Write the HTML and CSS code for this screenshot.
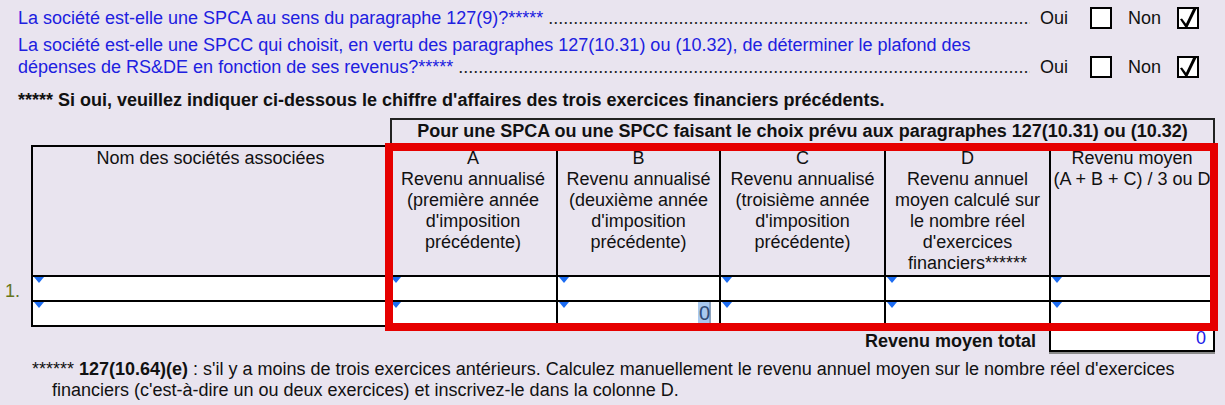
FILE: index.html
```html
<!DOCTYPE html>
<html lang="fr">
<head>
    <meta charset="UTF-8">
    <meta name="viewport" content="width=device-width, initial-scale=1.0">
    <title>Sociétés associées</title>
    <link rel="stylesheet" href="styles.css">
</head>
<body>
    <div class="questions">
        <div class="q-row">
            <span class="q-text">La société est-elle une SPCA au sens du paragraphe 127(9)?*****</span>
            <span class="leader"></span>
            <span class="opt oui">Oui</span><span class="box first"></span>
            <span class="opt non">Non</span><span class="box"><svg width="18" height="18" viewBox="0 0 18 18"><polygon points="1,10.2 3,9.4 7,14.8 14,0 17.4,0 8.6,18 6.2,18"/></svg></span>
        </div>
        <div class="q-line">La société est-elle une SPCC qui choisit, en vertu des paragraphes 127(10.31) ou (10.32), de déterminer le plafond des</div>
        <div class="q-row">
            <span class="q-text">dépenses de RS&amp;DE en fonction de ses revenus?*****</span>
            <span class="leader"></span>
            <span class="opt oui">Oui</span><span class="box first"></span>
            <span class="opt non">Non</span><span class="box"><svg width="18" height="18" viewBox="0 0 18 18"><polygon points="1,10.2 3,9.4 7,14.8 14,0 17.4,0 8.6,18 6.2,18"/></svg></span>
        </div>
        <p class="note">***** Si oui, veuillez indiquer ci-dessous le chiffre d'affaires des trois exercices financiers précédents.</p>
    </div>

    <div class="grid">
        <div></div>
        <div></div>
        <div class="sup">Pour une SPCA ou une SPCC faisant le choix prévu aux paragraphes 127(10.31) ou (10.32)</div>

        <div></div>
        <div class="head">Nom des sociétés associées</div>
        <div class="head">A<br>Revenu annualisé<br>(première année<br>d'imposition<br>précédente)</div>
        <div class="head">B<br>Revenu annualisé<br>(deuxième année<br>d'imposition<br>précédente)</div>
        <div class="head">C<br>Revenu annualisé<br>(troisième année<br>d'imposition<br>précédente)</div>
        <div class="head">D<br>Revenu annuel<br>moyen calculé sur<br>le nombre réel<br>d'exercices<br>financiers******</div>
        <div class="head last">Revenu moyen<br>(A + B + C) / 3 ou D</div>

        <div class="num">1.</div>
        <div class="cell"><i class="tri"></i></div>
        <div class="cell"><i class="tri"></i></div>
        <div class="cell"><i class="tri"></i></div>
        <div class="cell"><i class="tri"></i></div>
        <div class="cell"><i class="tri"></i></div>
        <div class="cell last"><i class="tri"></i></div>

        <div class="cell bottom"><i class="tri"></i></div>
        <div class="cell bottom"><i class="tri"></i></div>
        <div class="cell bottom val"><i class="tri"></i><span class="sel">0</span></div>
        <div class="cell bottom"><i class="tri"></i></div>
        <div class="cell bottom"><i class="tri"></i></div>
        <div class="cell bottom last"><i class="tri"></i></div>

        <div class="total-label">Revenu moyen total</div>
        <div class="total-box">0</div>

        <!-- annotation frame drawn over the table -->
        <div class="mark"></div>
    </div>

    <div class="foot">
        <div>****** <b>127(10.64)(e)</b> : s'il y a moins de trois exercices antérieurs. Calculez manuellement le revenu annuel moyen sur le nombre réel d'exercices</div>
        <div class="foot-more">financiers (c'est-à-dire un ou deux exercices) et inscrivez-le dans la colonne D.</div>
    </div>
</body>
</html>
```

FILE: styles.css
```css
* {
    box-sizing: border-box;
}

body {
    margin: 0;
    background: #e9e4ef;
    font-family: "Liberation Sans", Arial, sans-serif;
    font-size: 18px;
    color: #111;
    overflow: hidden;
}

/* questions on top */
.questions {
    padding: 7px 26px 0 18px;
}

.q-row {
    display: flex;
    align-items: center;
    height: 22px;
}

.q-line {
    margin-top: 6px;
    color: #2020e0;
}

.q-text {
    color: #2020e0;
    white-space: nowrap;
}

.leader {
    flex: 1;
    overflow: hidden;
    white-space: nowrap;
    margin: 0 10px 0 5px;
    color: #222;
}

.leader::after {
    content: "....................................................................................................................................................................................................................................................";
}

.opt {
    color: #111;
}

.oui {
    margin-right: 22px;
}

.non {
    margin-right: 16px;
}

.box {
    width: 22px;
    height: 22px;
    border: 2px solid #000;
    background: #fff;
    display: flex;
}

.box.first {
    margin-right: 16px;
}

.box svg {
    fill: #000;
}

.note {
    margin: 12px 0 0 0;
    font-weight: bold;
}

/* table */
.grid {
    position: relative;
    display: grid;
    grid-template-columns: 31px 357px 168px 163px 165px 165px 166px;
    grid-template-rows: 27px 130px 25px 27px 25px;
    margin-top: 7px;
}

.sup {
    grid-column: 3 / 8;
    margin-left: 2px;
    border: 2px solid #222;
    border-bottom: none;
    text-align: center;
    font-weight: bold;
    padding-top: 1px;
    white-space: nowrap;
}

.head {
    border-top: 2px solid #000;
    border-left: 2px solid #000;
    text-align: center;
    padding-top: 1px;
}

.head.last {
    white-space: nowrap;
    overflow: hidden;
}

.last {
    border-right: 2px solid #000;
}

.num {
    grid-row: span 2;
    padding: 6px 0 0 5px;
    color: #66761c;
}

.cell {
    background: #fff;
    border-top: 2px solid #000;
    border-left: 2px solid #000;
}

.cell.bottom {
    border-bottom: 2px solid #000;
}

.tri {
    display: block;
    width: 0;
    height: 0;
    margin-left: 1px;
    border-left: 5px solid transparent;
    border-right: 5px solid transparent;
    border-top: 6px solid #1c6cf2;
}

.val {
    display: flex;
    justify-content: space-between;
    align-items: flex-start;
}

.sel {
    background: #a9c9ef;
    color: #2f4b78;
    font-size: 20px;
    line-height: 23px;
    padding: 0 1px;
    margin-right: 8px;
    box-shadow: inset -2px 0 #8ea4c0;
}

.total-label {
    grid-column: 1 / 7;
    text-align: right;
    font-weight: bold;
    padding: 4px 13px 0 0;
}

.total-box {
    background: #fff;
    border-left: 2px solid #000;
    border-right: 2px solid #000;
    border-bottom: 2px solid #000;
    box-shadow: 0 2px 0 #8a8a8a;
    text-align: right;
    color: #2020e8;
    padding: 1px 7px 0 0;
}

.mark {
    position: absolute;
    left: 385px;
    top: 25px;
    width: 833px;
    height: 188px;
    border: 8px solid #e60000;
    pointer-events: none;
}

.foot {
    margin-top: 7px;
    padding-left: 32px;
}

.foot-more {
    padding-left: 20px;
}
```
